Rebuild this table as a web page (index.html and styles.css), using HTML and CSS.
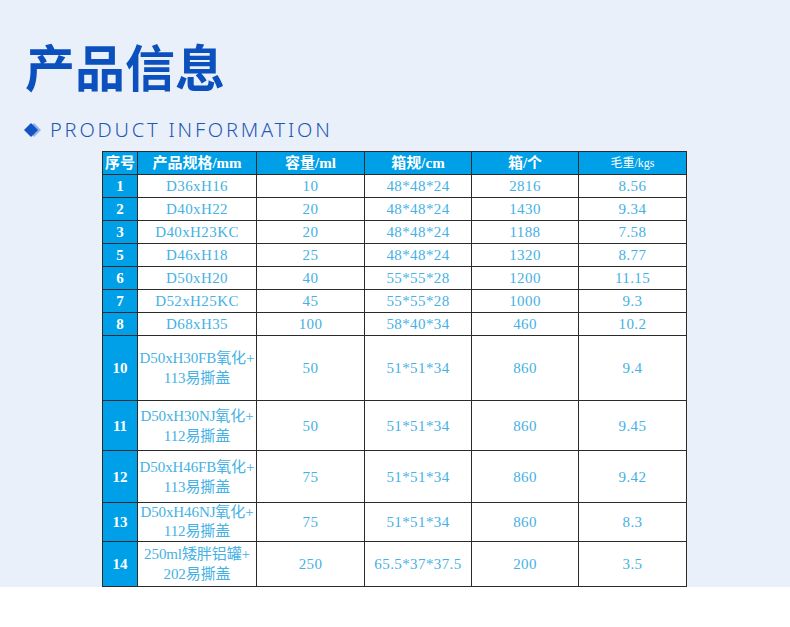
FILE: index.html
```html
<!DOCTYPE html>
<html lang="zh">
<head>
<meta charset="utf-8">
<title>产品信息</title>
<link rel="stylesheet" href="styles.css">
</head>
<body>
<div class="page">
  <h1 class="title">产品信息</h1>
  <div class="subtitle">
    <svg class="diamond" width="20" height="16" viewBox="0 0 20 16">
      <polygon points="11,1 18,8 11,15 4,8" fill="#8fb2e8"/>
      <polygon points="8,1 15,8 8,15 1,8" fill="#1353c4"/>
    </svg>
    <span class="sub-text">PRODUCT INFORMATION</span>
  </div>
  <table class="spec">
    <colgroup>
      <col class="c-no"><col class="c-spec"><col class="c-cap"><col class="c-box"><col class="c-qty"><col class="c-wt">
    </colgroup>
    <thead>
      <tr class="r-head">
        <th>序号</th><th>产品规格/mm</th><th>容量/ml</th><th>箱规/cm</th><th>箱/个</th><th class="small">毛重/kgs</th>
      </tr>
    </thead>
    <tbody>
      <tr class="r1"><th>1</th><td>D36xH16</td><td>10</td><td>48*48*24</td><td>2816</td><td>8.56</td></tr>
      <tr class="r1"><th>2</th><td>D40xH22</td><td>20</td><td>48*48*24</td><td>1430</td><td>9.34</td></tr>
      <tr class="r1"><th>3</th><td>D40xH23KC</td><td>20</td><td>48*48*24</td><td>1188</td><td>7.58</td></tr>
      <tr class="r1"><th>5</th><td>D46xH18</td><td>25</td><td>48*48*24</td><td>1320</td><td>8.77</td></tr>
      <tr class="r1"><th>6</th><td>D50xH20</td><td>40</td><td>55*55*28</td><td>1200</td><td>11.15</td></tr>
      <tr class="r1"><th>7</th><td>D52xH25KC</td><td>45</td><td>55*55*28</td><td>1000</td><td>9.3</td></tr>
      <tr class="r1"><th>8</th><td>D68xH35</td><td>100</td><td>58*40*34</td><td>460</td><td>10.2</td></tr>
      <tr class="r10"><th>10</th><td class="multi">D50xH30FB氧化+<br>113易撕盖</td><td>50</td><td>51*51*34</td><td>860</td><td>9.4</td></tr>
      <tr class="r11"><th>11</th><td class="multi">D50xH30NJ氧化+<br>112易撕盖</td><td>50</td><td>51*51*34</td><td>860</td><td>9.45</td></tr>
      <tr class="r12"><th>12</th><td class="multi">D50xH46FB氧化+<br>113易撕盖</td><td>75</td><td>51*51*34</td><td>860</td><td>9.42</td></tr>
      <tr class="r13"><th>13</th><td class="multi">D50xH46NJ氧化+<br>112易撕盖</td><td>75</td><td>51*51*34</td><td>860</td><td>8.3</td></tr>
      <tr class="r14"><th>14</th><td class="multi">250ml矮胖铝罐+<br>202易撕盖</td><td>250</td><td>65.5*37*37.5</td><td>200</td><td>3.5</td></tr>
    </tbody>
  </table>
</div>
</body>
</html>
```

FILE: styles.css
```css
html, body {
  margin: 0;
  padding: 0;
  background: #ffffff;
}

.page {
  background: #e9f0f9;
  padding: 40px 0 0 0;
  width: 790px;
}

.title {
  margin: 0 0 0 25px;
  font-family: "Noto Sans CJK SC", sans-serif;
  font-weight: 700;
  font-size: 50px;
  line-height: 50px;
  color: #0b50bd;
}

.subtitle {
  display: flex;
  align-items: center;
  margin: 30px 0 0 23px;
  height: 20px;
}

.diamond {
  display: block;
  flex: none;
}

.sub-text {
  margin-left: 7px;
  font-family: "Noto Sans", "Open Sans", sans-serif;
  font-weight: 300;
  font-size: 20px;
  line-height: 20px;
  letter-spacing: 2.8px;
  color: #1f57b5;
}

.spec {
  margin: 11px 0 0 102px;
  border-collapse: collapse;
  table-layout: fixed;
  width: 585px;
  background: #ffffff;
  font-family: "Liberation Serif", "Noto Sans CJK SC", serif;
  font-size: 15px;
  color: #45b1e4;
}

.c-no { width: 35px; }
.c-spec { width: 119px; }
.c-cap { width: 108px; }
.c-box { width: 107px; }
.c-qty { width: 107px; }
.c-wt { width: 108px; }

.spec th,
.spec td {
  border: 1px solid #2b2b2b;
  padding: 0;
  text-align: center;
  vertical-align: middle;
  white-space: nowrap;
  line-height: 20px;
  overflow: visible;
}

.spec td {
  letter-spacing: 0.4px;
}

.spec td.multi {
  letter-spacing: -0.1px;
}

.spec thead th {
  background: #00a0e9;
  color: #ffffff;
  font-family: "Liberation Serif", "Noto Sans CJK SC", serif;
  font-weight: 700;
  font-size: 15px;
  height: 22px;
}

.spec thead th.small {
  font-size: 12px;
  font-weight: 400;
}

.spec tbody th {
  background: #00a0e9;
  color: #ffffff;
  font-family: "Liberation Serif", serif;
  font-weight: 700;
  font-size: 15px;
}

.r1 th, .r1 td { height: 22px; }
.r10 th, .r10 td { height: 64px; }
.r11 th, .r11 td { height: 49px; }
.r12 th, .r12 td { height: 51px; }
.r13 th, .r13 td { height: 37px; line-height: 19px; }
.r14 th, .r14 td { height: 44px; }
```
